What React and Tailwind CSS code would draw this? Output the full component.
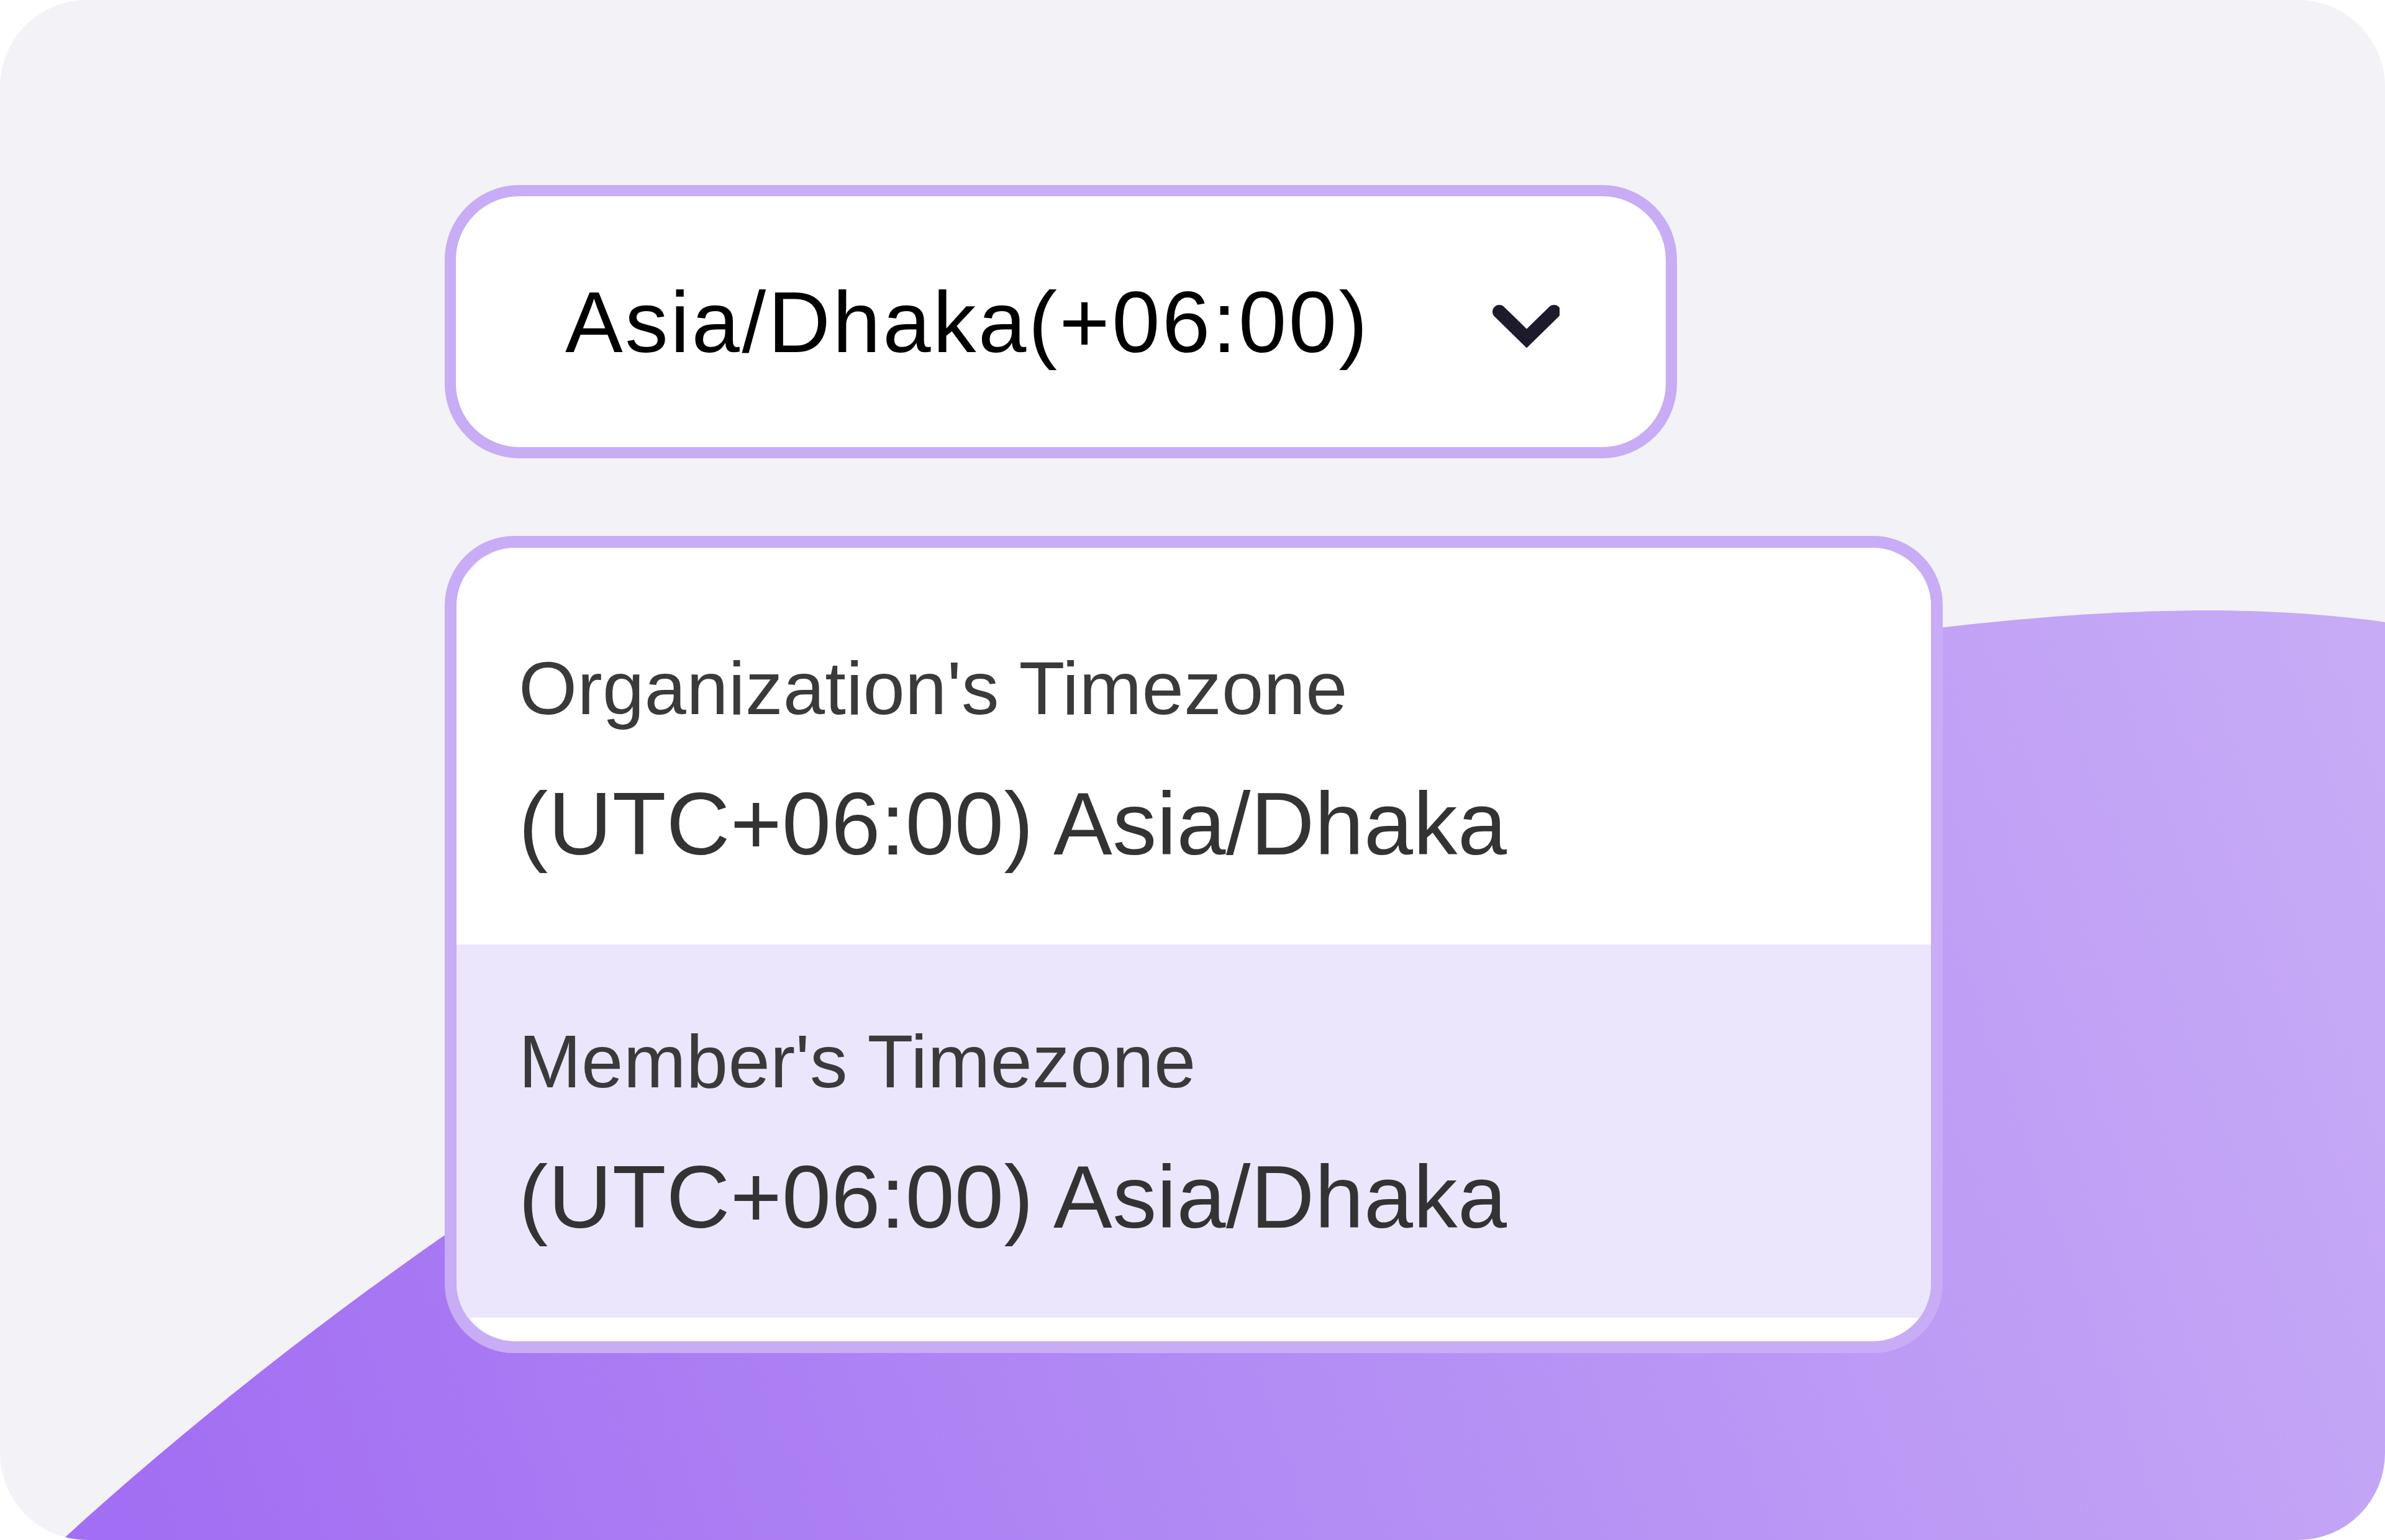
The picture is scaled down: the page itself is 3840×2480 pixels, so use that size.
import React from "react";

function Chevron() {
  return (
    <svg width="110" height="70" viewBox="0 0 110 70" className="block mt-[14px]">
      <polyline
        points="13,12 57,55 101,12"
        fill="none"
        stroke="#1c1a2b"
        strokeWidth="22"
        strokeLinecap="round"
        strokeLinejoin="miter"
      />
    </svg>
  );
}

function Row({ label, value, highlighted }) {
  return (
    <div
      className={`flex flex-col gap-[69px] pl-[100px] pt-[118px] pb-[114px] ${
        highlighted ? "bg-[#ebe6fc]" : "bg-white"
      }`}
    >
      <div className="text-[121px] leading-[140px] tracking-[0.3px] text-[#3a3a3a] whitespace-nowrap">
        {label}
      </div>
      <div className="text-[142px] leading-[160px] tracking-[0.4px] text-[#333333] whitespace-nowrap">
        {value}
      </div>
    </div>
  );
}

export default function App() {
  return (
    <div className="w-[3840px] h-[2480px] bg-white" style={{ fontFamily: '"Liberation Sans", Arial, sans-serif' }}>
      <div className="relative w-full h-full rounded-[140px] overflow-hidden bg-[#f2f2f7]">
        <svg
          className="absolute inset-0"
          width="3840"
          height="2480"
          viewBox="0 0 3840 2480"
        >
          <defs>
            <linearGradient id="blob" gradientUnits="userSpaceOnUse" x1="200" y1="2400" x2="3800" y2="1100">
              <stop offset="0" stopColor="#a26ef3" />
              <stop offset="0.45" stopColor="#b28bf4" />
              <stop offset="1" stopColor="#c7abf6" />
            </linearGradient>
          </defs>
          <path
            d="M 100 2480 C 900 1750, 2200 1000, 3535 983 C 3650 982, 3760 990, 3840 1002 L 3840 2480 Z"
            fill="url(#blob)"
          />
        </svg>

        <div className="relative flex flex-col items-start gap-[125px] pl-[716px] pt-[298px]">
          {/* Select */}
          <div className="w-[1984px] h-[440px] rounded-[120px] border-[18px] border-[#c8acf5] bg-white flex items-center justify-between pl-[176px] pr-[171px]">
            <span className="text-[139px] leading-none tracking-[3.5px] text-black whitespace-nowrap">
              Asia/Dhaka(+06:00)
            </span>
            <Chevron />
          </div>

          {/* Dropdown panel */}
          <div className="w-[2412px] rounded-[112px] border-[19px] border-[#c8acf5] bg-[#c8acf5]">
            <div className="rounded-[94px] overflow-hidden bg-white py-[38px] shadow-[inset_5px_0_5px_-3px_rgba(60,60,80,0.18)]">
              <Row label="Organization's Timezone" value="(UTC+06:00) Asia/Dhaka" />
              <Row label="Member's Timezone" value="(UTC+06:00) Asia/Dhaka" highlighted />
            </div>
          </div>
        </div>
      </div>
    </div>
  );
}
